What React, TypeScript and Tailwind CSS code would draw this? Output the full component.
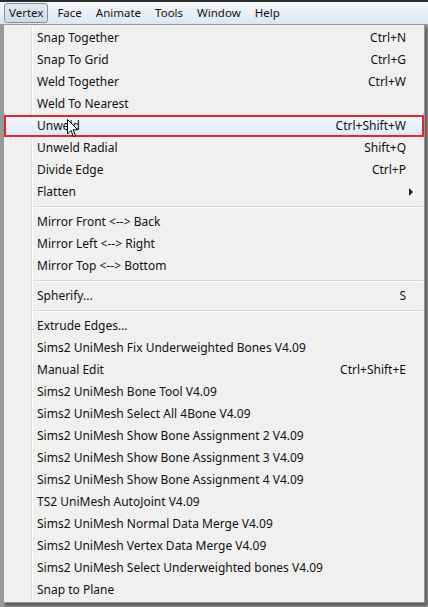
import React from "react";

type Row =
  | { kind: "item"; label: string; keys?: string; sub?: boolean; hot?: boolean }
  | { kind: "sep" };

const rows: Row[] = [
  { kind: "item", label: "Snap Together", keys: "Ctrl+N" },
  { kind: "item", label: "Snap To Grid", keys: "Ctrl+G" },
  { kind: "item", label: "Weld Together", keys: "Ctrl+W" },
  { kind: "item", label: "Weld To Nearest" },
  { kind: "item", label: "Unweld", keys: "Ctrl+Shift+W", hot: true },
  { kind: "item", label: "Unweld Radial", keys: "Shift+Q" },
  { kind: "item", label: "Divide Edge", keys: "Ctrl+P" },
  { kind: "item", label: "Flatten", sub: true },
  { kind: "sep" },
  { kind: "item", label: "Mirror Front <--> Back" },
  { kind: "item", label: "Mirror Left <--> Right" },
  { kind: "item", label: "Mirror Top <--> Bottom" },
  { kind: "sep" },
  { kind: "item", label: "Spherify...", keys: "S" },
  { kind: "sep" },
  { kind: "item", label: "Extrude Edges..." },
  { kind: "item", label: "Sims2 UniMesh Fix Underweighted Bones V4.09" },
  { kind: "item", label: "Manual Edit", keys: "Ctrl+Shift+E" },
  { kind: "item", label: "Sims2 UniMesh Bone Tool V4.09" },
  { kind: "item", label: "Sims2 UniMesh Select All 4Bone V4.09" },
  { kind: "item", label: "Sims2 UniMesh Show Bone Assignment 2 V4.09" },
  { kind: "item", label: "Sims2 UniMesh Show Bone Assignment 3 V4.09" },
  { kind: "item", label: "Sims2 UniMesh Show Bone Assignment 4 V4.09" },
  { kind: "item", label: "TS2 UniMesh AutoJoint V4.09" },
  { kind: "item", label: "Sims2 UniMesh Normal Data Merge V4.09" },
  { kind: "item", label: "Sims2 UniMesh Vertex Data Merge V4.09" },
  { kind: "item", label: "Sims2 UniMesh Select Underweighted bones V4.09" },
  { kind: "item", label: "Snap to Plane" },
];

const menus = ["Vertex", "Face", "Animate", "Tools", "Window", "Help"];

export default function App() {
  return (
    <div className="relative h-[607px] w-[428px] overflow-hidden bg-[#9a9a9a] font-['Noto_Sans',sans-serif] text-[12px] text-[#111]">
      <div className="flex h-[24px] items-center border-t-2 border-[#2b2b2b] bg-gradient-to-b from-[#f6f8fb] to-[#dfe6f0] pl-[4px] text-[11.5px]">
        {menus.map((m, i) => (
          <div
            key={m}
            className={
              i === 0
                ? "mr-[2px] flex h-[20px] items-center rounded-[3px] border border-[#8a8f96] bg-gradient-to-b from-[#e4e9f0] to-[#d3dae4] px-[4px]"
                : "flex h-[20px] items-center px-[7px]"
            }
          >
            {m}
          </div>
        ))}
      </div>

      <div className="relative ml-[3px] w-[422px] border border-[#979797] bg-[#f0f0f0] pt-[2px] pb-[1px] shadow-[2px_3px_3px_rgba(0,0,0,0.45)]">
        <div className="absolute top-[2px] bottom-[2px] left-[27px] w-[2px] border-l border-[#e0e0e0] bg-white" />
        {rows.map((r, i) =>
          r.kind === "sep" ? (
            <div key={i} className="flex h-[8px] flex-col justify-center pl-[30px] pr-[1px]">
              <div className="h-px bg-[#d7d7d7]" />
              <div className="h-px bg-white" />
            </div>
          ) : (
            <div
              key={i}
              className={
                r.hot
                  ? "relative flex h-[22px] items-center justify-between border-2 border-[#e8262a] bg-gradient-to-b from-[#f4f8fd] to-[#dde9f7] pr-[16px] pl-[31px]"
                  : "relative flex h-[22px] items-center justify-between pr-[18px] pl-[33px]"
              }
            >
              <span>{r.label}</span>
              {r.keys && <span>{r.keys}</span>}
              {r.sub && (
                <svg width="5" height="8" viewBox="0 0 5 8" className="absolute right-[10px]">
                  <path d="M0 0 L4 4 L0 8 Z" fill="#222" />
                </svg>
              )}
            </div>
          )
        )}
      </div>

      <svg
        width="12"
        height="19"
        viewBox="0 0 12 19"
        className="absolute top-[119px] left-[67px]"
      >
        <path
          d="M0.5 0.5 L0.5 15 L4 11.5 L6.5 17.5 L8.5 16.5 L6 10.8 L10.8 10.8 Z"
          fill="#fff"
          stroke="#000"
          strokeWidth="1"
        />
      </svg>
    </div>
  );
}
